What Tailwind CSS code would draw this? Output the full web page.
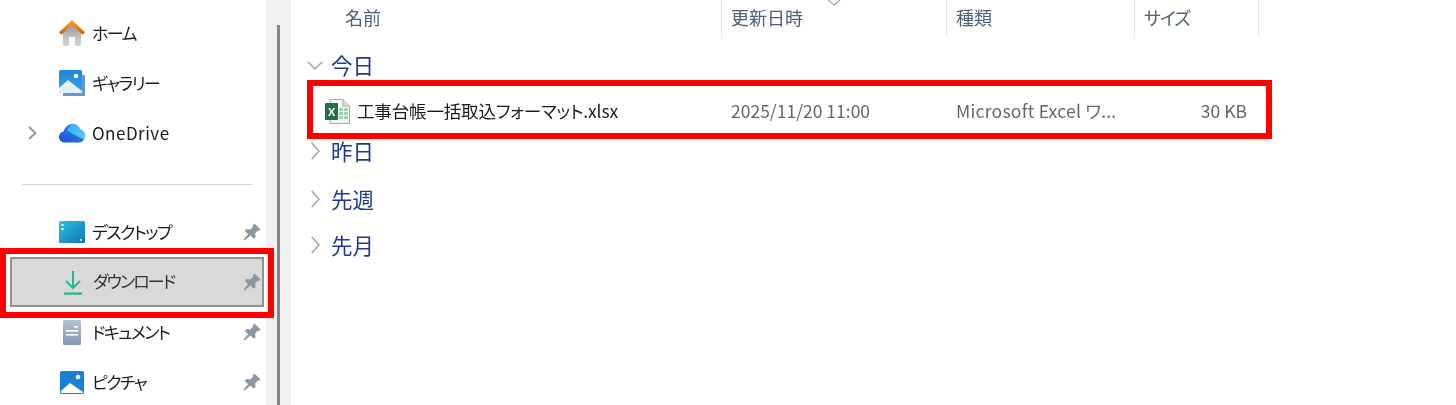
<!DOCTYPE html>
<html lang="ja">
<head>
    <meta charset="UTF-8">
    <title>ダウンロード</title>
    <script src="https://cdn.jsdelivr.net/npm/@tailwindcss/browser@4"></script>
</head>
<body class="bg-white overflow-hidden">
    <svg width="0" height="0" class="absolute">
        <defs>
            <linearGradient id="roof" x1="0" y1="0" x2="0" y2="1"><stop offset="0" stop-color="#f59a2c"/><stop offset="1" stop-color="#d9610c"/></linearGradient>
            <linearGradient id="wall" x1="0" y1="0" x2="0" y2="1"><stop offset="0" stop-color="#9a9a9a"/><stop offset="1" stop-color="#d6d6d6"/></linearGradient>
            <linearGradient id="sky" x1="0" y1="0" x2="0" y2="1"><stop offset="0" stop-color="#1f86d8"/><stop offset="1" stop-color="#3aa2ea"/></linearGradient>
            <linearGradient id="cloud" x1="0" y1="1" x2="1" y2="0"><stop offset="0" stop-color="#1a4fd6"/><stop offset="1" stop-color="#2f8df0"/></linearGradient>
            <linearGradient id="cloudtop" x1="0" y1="0" x2="1" y2="1"><stop offset="0" stop-color="#2fa8f0"/><stop offset="1" stop-color="#5fd0fa"/></linearGradient>
            <linearGradient id="desk" x1="0" y1="0" x2="1" y2="1"><stop offset="0" stop-color="#2cc3e0"/><stop offset="1" stop-color="#0f73b8"/></linearGradient>
            <linearGradient id="doc" x1="0" y1="0" x2="0" y2="1"><stop offset="0" stop-color="#b4c1d3"/><stop offset="1" stop-color="#8398b4"/></linearGradient>
            <symbol id="pin" viewBox="0 0 18 18">
                <path d="M11.500 .5l6 6-1.600 1.400-1-.5-2.800 3 .5 3.500-1.800 1.800-3.300-3.300L1.500 17.500.5 16.500l4.600-5.300-3.300-3.300 1.800-1.800 3.500.5 3-2.800-.5-1z" fill="#8c979f"/>
            </symbol>
        </defs>
    </svg>

    <div class="flex h-[405px] font-['Noto_Sans_CJK_JP','Noto_Sans',sans-serif] [font-feature-settings:'palt'] blur-[0.3px]">
        <!-- ナビゲーション -->
        <aside class="w-[266px] shrink-0 pt-[8px] text-[17px] text-[#1c1c1c] tracking-[-1.6px]">
            <div class="flex items-center h-[50px] pl-[59px]">
                <svg class="w-[26px] h-[26px] mr-[7px]" viewBox="0 0 26 26">
                    <path d="M4 12L13 4l9 8v14h-6v-9h-6v9H4z" fill="url(#wall)"/>
                    <path d="M1.200 13.500L13 2.500l11.800 11" fill="none" stroke="url(#roof)" stroke-width="3.600"/>
                </svg>
                <span class="pb-px">ホーム</span>
            </div>
            <div class="flex items-center h-[50px] pl-[59px]">
                <svg class="w-[26px] h-[26px] mr-[7px]" viewBox="0 0 26 26">
                    <path d="M23 5h3v21H4v-3h19z" fill="#5c9bd6"/>
                    <rect x="0" y="0" width="23" height="23" rx="1.500" fill="url(#sky)"/>
                    <path d="M0 23v-5l9-8 14 11v2z" fill="#e4f0fa"/>
                    <circle cx="17" cy="6" r="2.300" fill="#fff"/>
                </svg>
                <span class="pb-px">ギャラリー</span>
            </div>
            <div class="flex items-center h-[50px] pl-[28px]">
                <svg class="w-[9px] h-[14px] mr-[22px]" viewBox="0 0 9 14"><path d="M1 1l6.500 6L1 13" fill="none" stroke="#999" stroke-width="2"/></svg>
                <svg class="w-[26px] h-[20px] mr-[7px]" viewBox="0 0 26 20">
                    <path d="M6 19.500C2.500 19.500 0 17 0 14s2-5 4.500-5.500C6 4 9.500 1 13.500 1c3.500 0 6.500 2 8 5.500C24.500 7.500 26 10 26 13c0 3.500-2.500 6.500-6 6.500z" fill="url(#cloud)"/>
                    <path d="M8 7.500C9.500 3.500 11.500 1 13.500 1c3.500 0 6.500 2 8 5.500C24.500 7.500 26 10 26 13c0 1.500-.5 2.500-1 3.500L14 11z" fill="url(#cloudtop)"/>
                </svg>
                <span class="pb-px tracking-[0.5px]">OneDrive</span>
            </div>
            <div class="h-[27px] flex items-end pl-[22px]">
                <div class="w-[230px] h-px bg-[#d2d2d2]"></div>
            </div>
            <div class="flex items-center h-[50px] mt-[22px] pl-[59px]">
                <svg class="w-[26px] h-[22px] mr-[7px]" viewBox="0 0 26 22">
                    <rect width="26" height="22" rx="1.500" fill="url(#desk)"/>
                    <rect x="2.500" y="3" width="2" height="2" fill="#fff"/>
                    <rect x="2.500" y="7" width="2" height="2" fill="#fff"/>
                    <rect x="21" y="18" width="2" height="2" fill="#bfe6f5"/>
                </svg>
                <span class="flex-1 pb-px">デスクトップ</span>
                <svg class="w-[18px] h-[18px] mr-[5px]"><use href="#pin"/></svg>
            </div>
            <div class="flex items-center h-[50px] ml-[10px] mr-[2px] pl-[52px] bg-[#d9d9d9] border-2 border-[#8e9392] text-[#333]">
                <svg class="w-[18px] h-[25px] mr-[11px]" viewBox="0 0 18 25">
                    <path d="M9 1v16M2 11l7 7 7-7" fill="none" stroke="#23b892" stroke-width="2"/>
                    <rect x="0" y="22.500" width="18" height="2.200" fill="#23b892"/>
                </svg>
                <span class="flex-1 pb-[2px] tracking-[-1.9px]">ダウンロード</span>
                <svg class="w-[18px] h-[18px] mr-[1px]"><use href="#pin"/></svg>
            </div>
            <div class="flex items-center h-[50px] pl-[63px]">
                <svg class="w-[18px] h-[25px] mr-[11px]" viewBox="0 0 18 25">
                    <rect width="18" height="25" rx="1.500" fill="url(#doc)"/>
                    <rect x="3" y="10" width="12" height="1.600" fill="#fff"/>
                    <rect x="3" y="14" width="12" height="1.600" fill="#fff"/>
                    <rect x="11" y="6" width="4" height="1.600" fill="#fff"/>
                </svg>
                <span class="flex-1 pb-px">ドキュメント</span>
                <svg class="w-[18px] h-[18px] mr-[5px]"><use href="#pin"/></svg>
            </div>
            <div class="flex items-center h-[50px] pl-[60px]">
                <svg class="w-[24px] h-[23px] mr-[8px]" viewBox="0 0 24 23">
                    <rect width="24" height="23" rx="1.500" fill="#1980d6"/>
                    <path d="M1 22v-2l9-8 13 9v1z" fill="#fff"/>
                    <circle cx="18" cy="6" r="2.300" fill="#fff"/>
                </svg>
                <span class="flex-1 pb-px">ピクチャ</span>
                <svg class="w-[18px] h-[18px] mr-[5px]"><use href="#pin"/></svg>
            </div>
        </aside>

        <!-- スクロールバー -->
        <div class="w-[25px] shrink-0 bg-[#f0f0f0] pl-[11px] pt-[25px]">
            <div class="w-[3px] h-full bg-[#858585]"></div>
        </div>

        <!-- ファイル一覧 -->
        <main class="flex-1 relative">
            <div class="flex h-[37px] text-[18px] text-[#4c607a]">
                <div class="w-[431px] pl-[54px] pb-[3px] flex items-center border-r border-[#e5e5e5]">名前</div>
                <div class="w-[225px] pl-[9px] pb-[3px] flex items-center border-r border-[#e5e5e5] relative">
                    更新日時
                    <svg class="absolute left-[105px] top-0 w-[14px] h-[6px]" viewBox="0 0 14 6"><path d="M1 0l6 5 6-5" fill="none" stroke="#a6a6a6" stroke-width="1.200"/></svg>
                </div>
                <div class="w-[188px] pl-[9px] pb-[3px] flex items-center border-r border-[#e5e5e5]">種類</div>
                <div class="w-[124px] pl-[9px] pb-[3px] flex items-center border-r border-[#e5e5e5] tracking-[-1px]">サイズ</div>
            </div>

            <div class="flex items-center h-[47px] mt-[6px] pb-[2px] pl-[16px] text-[21.500px] text-[#1e3a8a]">
                <svg class="w-[16px] h-[9px] mr-[8px]" viewBox="0 0 16 9"><path d="M.7 .7L8 8l7.300-7.300" fill="none" stroke="#a6a6a6" stroke-width="1.600"/></svg>
                今日
            </div>

            <div class="flex items-center h-[42px] text-[17.500px] text-[#666]">
                <div class="w-[430px] pl-[34px] flex items-center text-[17.500px] text-[#1c1c1c] tracking-[-0.15px]">
                    <svg class="w-[25px] h-[25px] mr-[7px]" viewBox="0 0 25 25">
                        <path d="M5 .5h13l6.500 6.500v17.500H5z" fill="#f6f6f6" stroke="#a8a8a8"/>
                        <path d="M18 .5V7h6.500" fill="#dcdcdc" stroke="#a8a8a8"/>
                        <path d="M14 9h4v3h-4zm5 0h4v3h-4zm-5 4h4v3h-4zm5 0h4v3h-4zm-5 4h4v3h-4zm5 0h4v3h-4z" fill="#9fd0b2"/>
                        <rect x="0" y="4" width="13" height="17" rx="1" fill="#1f7244"/>
                        <text x="6.500" y="16.500" text-anchor="middle" font-size="11" font-weight="700" fill="#fff" font-family="Liberation Sans, sans-serif">X</text>
                    </svg>
                    <span>工事台帳一括取込フォーマット.xlsx</span>
                </div>
                <div class="w-[225px] pl-[10px]">2025/11/20 11:00</div>
                <div class="w-[188px] pl-[10px] tracking-[0.25px]">Microsoft Excel ワ...</div>
                <div class="w-[113px] text-right">30 KB</div>
            </div>

            <div class="flex items-center h-[40px] pb-[2px] pl-[20px] text-[21.500px] text-[#1e3a8a]">
                <svg class="w-[9px] h-[18px] mr-[11px]" viewBox="0 0 9 18"><path d="M.7 .7L8 9 .7 17.300" fill="none" stroke="#a6a6a6" stroke-width="1.600"/></svg>
                昨日
            </div>
            <div class="flex items-center h-[56px] pb-[2px] pl-[20px] text-[21.500px] text-[#1e3a8a]">
                <svg class="w-[9px] h-[18px] mr-[11px]" viewBox="0 0 9 18"><path d="M.7 .7L8 9 .7 17.300" fill="none" stroke="#a6a6a6" stroke-width="1.600"/></svg>
                先週
            </div>
            <div class="flex items-center h-[36px] pb-[2px] pl-[20px] text-[21.500px] text-[#1e3a8a]">
                <svg class="w-[9px] h-[18px] mr-[11px]" viewBox="0 0 9 18"><path d="M.7 .7L8 9 .7 17.300" fill="none" stroke="#a6a6a6" stroke-width="1.600"/></svg>
                先月
            </div>
        </main>
    </div>

    <!-- 赤枠 -->
    <div class="absolute left-0 top-[248px] w-[274px] h-[70px] border-[6px] border-[#ff0000]"></div>
    <div class="absolute left-[307px] top-[80px] w-[965px] h-[59px] border-[6px] border-[#ff0000]"></div>
</body>
</html>
